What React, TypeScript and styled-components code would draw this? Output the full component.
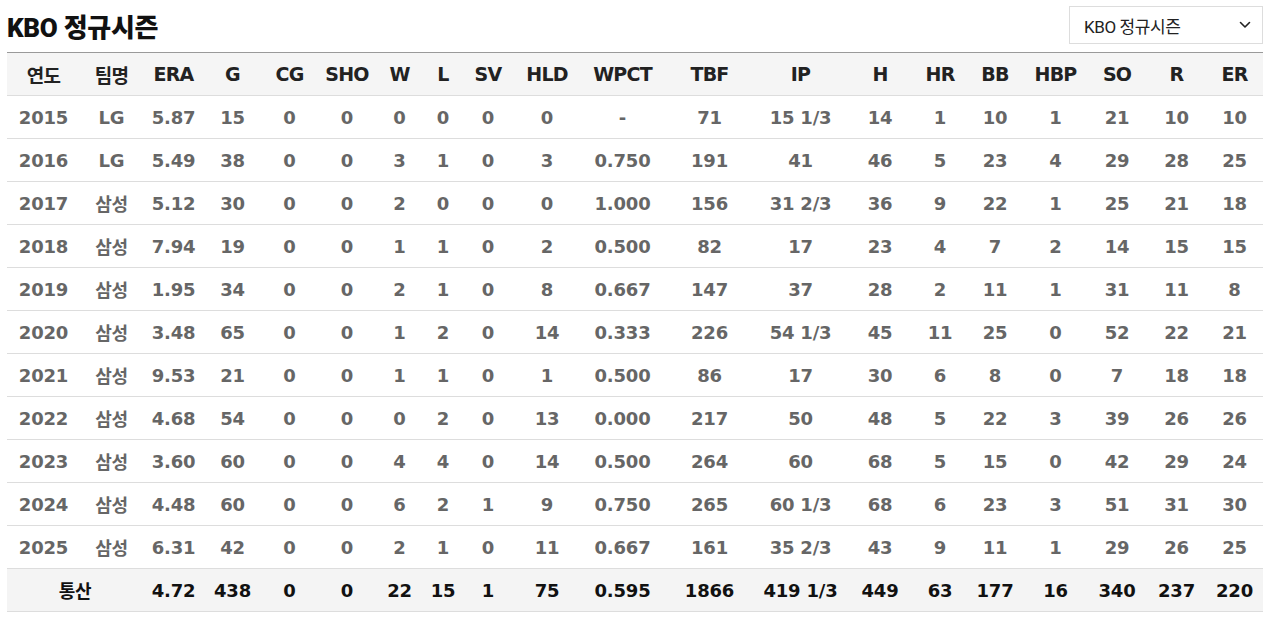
import React, { FC } from 'react';
import styled, { createGlobalStyle } from 'styled-components';

const GlobalStyle = createGlobalStyle`
  body {
    margin: 0;
    background: #fff;
    font-family: "DejaVu Sans", "Noto Sans CJK KR", sans-serif;
  }
`;

const Page = styled.div`
  padding: 6px 7px 0 7px;
`;

const TopBar = styled.div`
  display: flex;
  justify-content: space-between;
  align-items: center;
  height: 38px;
  margin-bottom: 8px;
`;

const Title = styled.h2`
  margin: 0;
  font-family: Roboto, "Noto Sans CJK KR", sans-serif;
  font-size: 26px;
  font-weight: 900;
  color: #111;
  letter-spacing: -0.3px;
`;

const SelectBox = styled.div`
  box-sizing: border-box;
  width: 194px;
  height: 38px;
  border: 1px solid #ddd;
  display: flex;
  align-items: center;
  justify-content: space-between;
  padding: 0 10px 0 14px;
  font-family: Roboto, "Noto Sans CJK KR", sans-serif;
  font-size: 17px;
  color: #222;
  letter-spacing: -0.4px;
`;

const Table = styled.table`
  width: 1256px;
  border-collapse: collapse;
  table-layout: fixed;
  border-top: 1px solid #9a9a9a;
`;

const HeadCell = styled.th`
  height: 42px;
  background: #f5f5f5;
  font-size: 19px;
  font-weight: 700;
  color: #222;
  text-align: center;
  padding: 0;
  border-bottom: 1px solid #ddd;
  letter-spacing: -0.8px;
  white-space: nowrap;
`;

const Cell = styled.td<{ $total?: boolean }>`
  height: 42px;
  text-align: center;
  padding: 0;
  font-size: 18px;
  font-weight: 700;
  color: ${(p) => (p.$total ? '#111' : '#666')};
  background: ${(p) => (p.$total ? '#f4f4f4' : '#fff')};
  border-bottom: 1px solid #ddd;
  letter-spacing: -0.2px;
  white-space: nowrap;
`;

const columns: [string, number][] = [
  ['연도', 73], ['팀명', 63], ['ERA', 61], ['G', 57], ['CG', 57], ['SHO', 58],
  ['W', 47], ['L', 40], ['SV', 50], ['HLD', 68], ['WPCT', 83], ['TBF', 91],
  ['IP', 91], ['H', 68], ['HR', 52], ['BB', 58], ['HBP', 63], ['SO', 60],
  ['R', 59], ['ER', 57],
];

const rows: string[][] = [
  ['2015', 'LG', '5.87', '15', '0', '0', '0', '0', '0', '0', '-', '71', '15 1/3', '14', '1', '10', '1', '21', '10', '10'],
  ['2016', 'LG', '5.49', '38', '0', '0', '3', '1', '0', '3', '0.750', '191', '41', '46', '5', '23', '4', '29', '28', '25'],
  ['2017', '삼성', '5.12', '30', '0', '0', '2', '0', '0', '0', '1.000', '156', '31 2/3', '36', '9', '22', '1', '25', '21', '18'],
  ['2018', '삼성', '7.94', '19', '0', '0', '1', '1', '0', '2', '0.500', '82', '17', '23', '4', '7', '2', '14', '15', '15'],
  ['2019', '삼성', '1.95', '34', '0', '0', '2', '1', '0', '8', '0.667', '147', '37', '28', '2', '11', '1', '31', '11', '8'],
  ['2020', '삼성', '3.48', '65', '0', '0', '1', '2', '0', '14', '0.333', '226', '54 1/3', '45', '11', '25', '0', '52', '22', '21'],
  ['2021', '삼성', '9.53', '21', '0', '0', '1', '1', '0', '1', '0.500', '86', '17', '30', '6', '8', '0', '7', '18', '18'],
  ['2022', '삼성', '4.68', '54', '0', '0', '0', '2', '0', '13', '0.000', '217', '50', '48', '5', '22', '3', '39', '26', '26'],
  ['2023', '삼성', '3.60', '60', '0', '0', '4', '4', '0', '14', '0.500', '264', '60', '68', '5', '15', '0', '42', '29', '24'],
  ['2024', '삼성', '4.48', '60', '0', '0', '6', '2', '1', '9', '0.750', '265', '60 1/3', '68', '6', '23', '3', '51', '31', '30'],
  ['2025', '삼성', '6.31', '42', '0', '0', '2', '1', '0', '11', '0.667', '161', '35 2/3', '43', '9', '11', '1', '29', '26', '25'],
];

const total = ['4.72', '438', '0', '0', '22', '15', '1', '75', '0.595', '1866', '419 1/3', '449', '63', '177', '16', '340', '237', '220'];

const Chevron: FC = () => (
  <svg width="14" height="14" viewBox="0 0 14 14" fill="none">
    <path d="M2.5 4.5 L7 9 L11.5 4.5" stroke="#222" strokeWidth="1.6" strokeLinecap="round" strokeLinejoin="round" />
  </svg>
);

const App: FC = () => {
  return (
    <Page>
      <GlobalStyle />
      <TopBar>
        <Title>KBO 정규시즌</Title>
        <SelectBox>
          <span>KBO 정규시즌</span>
          <Chevron />
        </SelectBox>
      </TopBar>
      <Table>
        <colgroup>
          {columns.map(([name, w]) => (
            <col key={name} style={{ width: w }} />
          ))}
        </colgroup>
        <thead>
          <tr>
            {columns.map(([name]) => (
              <HeadCell key={name}>{name}</HeadCell>
            ))}
          </tr>
        </thead>
        <tbody>
          {rows.map((row) => (
            <tr key={row[0]}>
              {row.map((v, i) => (
                <Cell key={i}>{v}</Cell>
              ))}
            </tr>
          ))}
          <tr>
            <Cell $total colSpan={2}>통산</Cell>
            {total.map((v, i) => (
              <Cell $total key={i}>{v}</Cell>
            ))}
          </tr>
        </tbody>
      </Table>
    </Page>
  );
};

export default App;
